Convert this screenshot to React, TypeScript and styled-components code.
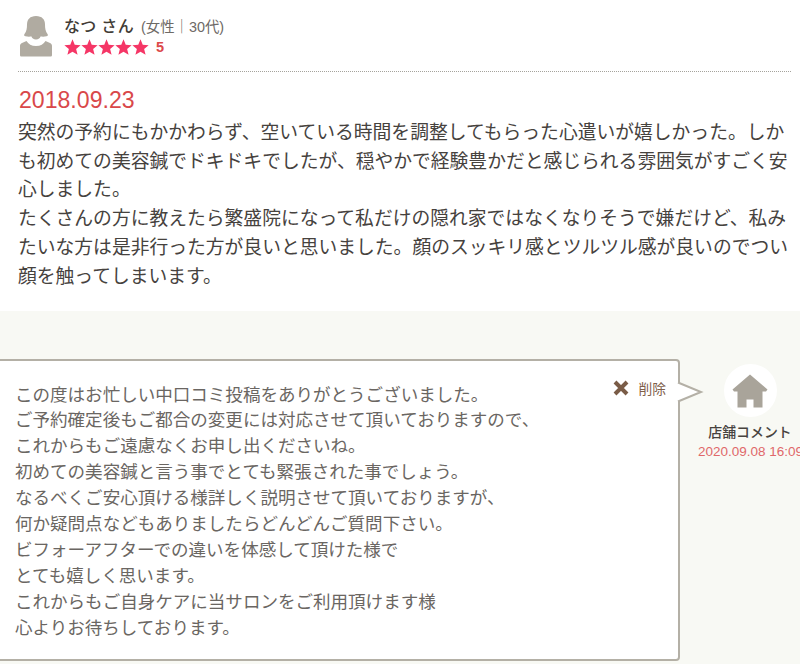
import React from "react";
import styled, { createGlobalStyle } from "styled-components";

const Global = createGlobalStyle`
  html, body { margin: 0; padding: 0; background: #fff; overflow: hidden; }
  body { font-family: "Liberation Sans", "Noto Sans CJK JP", sans-serif; }
`;
const Page = styled.div`
  width: 800px; height: 664px; overflow: hidden; display: flex; flex-direction: column;
`;
const Review = styled.section`
  height: 311px; box-sizing: border-box; padding: 16px 9px 0 18px; background: #fff;
`;
const Header = styled.header`
  display: flex; align-items: flex-start; gap: 12px; height: 56px; padding-left: 2px; box-sizing: border-box; border-bottom: 1px dotted #a5a39c;
`;
const UserInfo = styled.div`
  display: flex; flex-direction: column; margin-top: -3px;
`;
const NameRow = styled.div`
  display: flex; align-items: baseline; height: 22px; color: #3f3a36;
`;
const Name = styled.span`
  font-size: 16px; font-weight: 500; letter-spacing: 0.3px; color: #423c36; margin-right: 7px;
`;
const Meta = styled.span`
  font-size: 14.4px; color: #6e6a66;
`;
const RatingRow = styled.div`
  display: flex; align-items: center; gap: 7px; height: 23px;
`;
const Stars = styled.div`
  display: flex;
`;
const Score = styled.span`
  font-size: 14.5px; font-weight: 700; color: #dc4a4a;
`;
const ReviewDate = styled.div`
  font-size: 23.1px; line-height: 26px; color: #d9484a; margin: 15px 0 0 1px;
`;
const ReviewBody = styled.p`
  margin: 6px 0 0; font-size: 18.8px; line-height: 28.7px; color: #46423e; width: 775px;
`;
const Comment = styled.section`
  flex: 1; background: #f8f9f4; display: flex; align-items: flex-start; padding-top: 48px;
`;
const Bubble = styled.div`
  position: relative; box-sizing: border-box; flex: none; width: 690px; height: 302px; margin-left: -10px;
  background: #fff; border: 2px solid #b4b0a6; border-radius: 4px; padding: 21.5px 0 0 24px;
`;
const BubbleText = styled.p`
  margin: 0 0 0 -1px; font-size: 17.55px; line-height: 25.9px; color: #6a6662;
`;
const DeleteButton = styled.div`
  position: absolute; top: 17px; right: 12px; display: flex; align-items: center; gap: 9px;
  font-size: 13.8px; color: #80604a;
`;
const Tail = styled.svg`
  position: absolute; left: 100%; top: 20px; margin-left: -2px; display: block;
`;
const Shop = styled.div`
  flex: none; width: 106px; margin-left: 17px; margin-top: 5px; display: flex; flex-direction: column; align-items: center;
`;
const ShopAvatar = styled.div`
  width: 53px; height: 53px; border-radius: 50%; background: #fff; display: flex; align-items: center; justify-content: center;
`;
const ShopLabel = styled.div`
  font-size: 13.9px; font-weight: 500; color: #47433f; margin-top: 5px; white-space: nowrap; line-height: 20px;
`;
const ShopDate = styled.div`
  font-size: 13.5px; color: #e0686a; white-space: nowrap; line-height: 16px; margin-top: 2px; margin-left: 1px; align-self: flex-start;
`;

const Star = () => (
  <svg width="17" height="16" viewBox="0 0 24 23" style={{ display: "block" }}>
    <path d="M12 0.5l3.2 7.9 8.5.6-6.5 5.5 2.1 8.3L12 18.3 4.700 22.800l2.100-8.300L.3 9l8.500-.6z" fill="#f53666" />
  </svg>
);

const UserIcon = () => (
  <svg width="32" height="41" viewBox="0 0 32 41" style={{ flex: "none" }}>
    <path fill="#b0aba1" d="M16 0c6 0 9 3.500 9 8.500 0 4 .5 7 2.500 9.500.8 1 .3 2-1 2.300-2 .5-4.500.4-6 .2-.4 1.600-2 3-4.500 3s-4.100-1.400-4.500-3c-1.500.2-4 .3-6-.2-1.300-.3-1.800-1.300-1-2.300 2-2.500 2.500-5.500 2.500-9.500C7 3.500 10 0 16 0z" />
    <path fill="#b0aba1" d="M6.500 25c1.800 3 5 5 9.500 5s7.700-2 9.500-5l4.500 2c1.300.6 2 1.700 2 3v9c0 1-.7 1.500-1.500 1.500h-29C.7 40.500 0 40 0 39v-9c0-1.300.7-2.400 2-3z" />
  </svg>
);

const HomeIcon = () => (
  <svg width="36" height="34" viewBox="0 0 36 34" style={{ display: "block" }}>
    <path fill="#a9a49a" d="M18 0.500L35.500 15.500 34 17.500H30.500V33.500H21.500V25.500H14.500V33.500H5.500V17.500H2L.5 15.500z" />
  </svg>
);

const CrossIcon = () => (
  <svg width="16" height="16" viewBox="0 0 16 16" style={{ display: "block" }}>
    <path d="M2 2l12 12M14 2L2 14" stroke="#7a5c47" strokeWidth="4" />
  </svg>
);

export default function App() {
  return (
    <Page>
      <Global />
      <Review>
        <Header>
          <UserIcon />
          <UserInfo>
            <NameRow>
              <Name>なつ さん</Name>
              <Meta>(女性｜30代)</Meta>
            </NameRow>
            <RatingRow>
              <Stars>
                {[0, 1, 2, 3, 4].map((i) => <Star key={i} />)}
              </Stars>
              <Score>5</Score>
            </RatingRow>
          </UserInfo>
        </Header>
        <ReviewDate>2018.09.23</ReviewDate>
        <ReviewBody>
          突然の予約にもかかわらず、空いている時間を調整してもらった心遣いが嬉しかった。しかも初めての美容鍼でドキドキでしたが、穏やかで経験豊かだと感じられる雰囲気がすごく安心しました。
          <br />
          たくさんの方に教えたら繁盛院になって私だけの隠れ家ではなくなりそうで嫌だけど、私みたいな方は是非行った方が良いと思いました。顔のスッキリ感とツルツル感が良いのでつい顔を触ってしまいます。
        </ReviewBody>
      </Review>
      <Comment>
        <Bubble>
          <BubbleText>
            この度はお忙しい中口コミ投稿をありがとうございました。<br />
            ご予約確定後もご都合の変更には対応させて頂いておりますので、<br />
            これからもご遠慮なくお申し出くださいね。<br />
            初めての美容鍼と言う事でとても緊張された事でしょう。<br />
            なるべくご安心頂ける様詳しく説明させて頂いておりますが、<br />
            何か疑問点などもありましたらどんどんご質問下さい。<br />
            ビフォーアフターでの違いを体感して頂けた様で<br />
            とても嬉しく思います。<br />
            これからもご自身ケアに当サロンをご利用頂けます様<br />
            心よりお待ちしております。
          </BubbleText>
          <DeleteButton>
            <CrossIcon />
            <span>削除</span>
          </DeleteButton>
          <Tail width="28" height="22" viewBox="0 0 28 22">
            <path d="M2 1.500L25 11 2 20.500" fill="#fff" stroke="#b4b0a6" strokeWidth="2" />
          </Tail>
        </Bubble>
        <Shop>
          <ShopAvatar><HomeIcon /></ShopAvatar>
          <ShopLabel>店舗コメント</ShopLabel>
          <ShopDate>2020.09.08 16:09</ShopDate>
        </Shop>
      </Comment>
    </Page>
  );
}
